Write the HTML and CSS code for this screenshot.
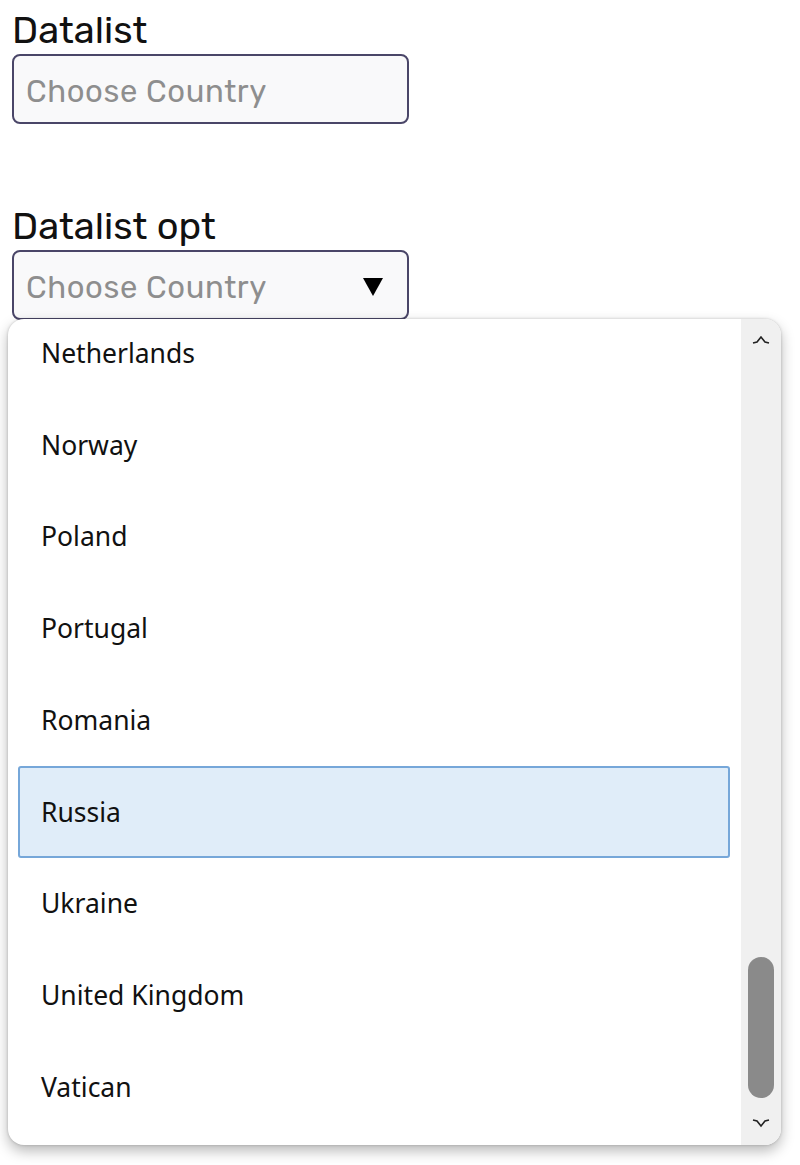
FILE: index.html
```html
<!DOCTYPE html>
<html>
<head>
<meta charset="utf-8">
<link rel="stylesheet" href="styles.css">
</head>
<body>
<div class="page">
  <div class="field">
    <label class="label">Datalist</label>
    <div class="input"><span class="placeholder">Choose Country</span></div>
  </div>
  <div class="field field-opt">
    <label class="label">Datalist opt</label>
    <div class="input select">
      <span class="placeholder">Choose Country</span>
      <svg class="caret" width="20" height="18" viewBox="0 0 20 18"><polygon points="0,0 20,0 10,18" fill="#000"/></svg>
    </div>
  </div>
</div>
<div class="dropdown">
  <div class="list">
    <div class="option">Netherlands</div>
    <div class="option">Norway</div>
    <div class="option">Poland</div>
    <div class="option">Portugal</div>
    <div class="option">Romania</div>
    <div class="option selected">Russia</div>
    <div class="option">Ukraine</div>
    <div class="option">United Kingdom</div>
    <div class="option">Vatican</div>
  </div>
  <div class="scrollbar">
    <svg class="arrow" width="18" height="10" viewBox="0 0 18 10"><polyline points="1,8 5,7 9,2 13,7 17,8" fill="none" stroke="#222" stroke-width="1.6"/></svg>
    <div class="track"><div class="thumb"></div></div>
    <svg class="arrow" width="18" height="10" viewBox="0 0 18 10"><polyline points="1,2 5,3 9,8 13,3 17,2" fill="none" stroke="#222" stroke-width="1.6"/></svg>
  </div>
</div>
</body>
</html>
```

FILE: styles.css
```css
html, body {
  margin: 0;
  padding: 0;
  background: #ffffff;
}
body {
  position: relative;
  width: 800px;
  height: 1165px;
  overflow: hidden;
}
.page {
  padding: 8px 0 0 12px;
  display: flex;
  flex-direction: column;
}
.field {
  display: flex;
  flex-direction: column;
  gap: 2px;
}
.field-opt {
  margin-top: 80px;
}
.label {
  font-family: Rubik, Roboto, "Liberation Sans", sans-serif;
  font-size: 38px;
  line-height: 44px;
  color: #111111;
  letter-spacing: 0;
}
.input {
  box-sizing: border-box;
  width: 397px;
  height: 70px;
  border: 2px solid #4a4668;
  border-radius: 8px;
  background: #f9f9fa;
  display: flex;
  align-items: center;
  padding: 4px 12px 0;
}
.placeholder {
  font-family: Rubik, Roboto, "Liberation Sans", sans-serif;
  font-size: 31px;
  color: #8e8e8e;
  letter-spacing: 0.6px;
  flex: 1;
}
.caret {
  margin-right: 12px;
}
.dropdown {
  position: absolute;
  left: 8px;
  top: 319px;
  width: 773px;
  height: 826px;
  border-radius: 16px;
  background: #ffffff;
  box-shadow: 0 6px 14px rgba(0, 0, 0, 0.28), 0 0 3px rgba(0, 0, 0, 0.2);
  overflow: hidden;
  display: flex;
}
.list {
  flex: 1;
  padding: 0 11px 0 10px;
  margin-top: -12px;
}
.option {
  box-sizing: border-box;
  height: 91.75px;
  display: flex;
  align-items: center;
  padding-left: 21px;
  font-family: "Segoe UI", "Noto Sans", "Open Sans", sans-serif;
  font-size: 26.5px;
  color: #111111;
  border: 2px solid transparent;
  border-radius: 3px;
}
.option.selected {
  background: #e0edf9;
  border-color: #76a7d9;
}
.scrollbar {
  width: 40px;
  background: #f0f0f0;
  display: flex;
  flex-direction: column;
  align-items: center;
  padding: 16px 0 17px;
  box-sizing: border-box;
}
.arrow {
  flex: none;
}
.track {
  flex: 1;
  width: 100%;
  display: flex;
  flex-direction: column;
  justify-content: flex-end;
  align-items: center;
  padding-bottom: 20px;
}
.thumb {
  width: 26px;
  height: 141px;
  border-radius: 13px;
  background: #8a8a8a;
}
```
